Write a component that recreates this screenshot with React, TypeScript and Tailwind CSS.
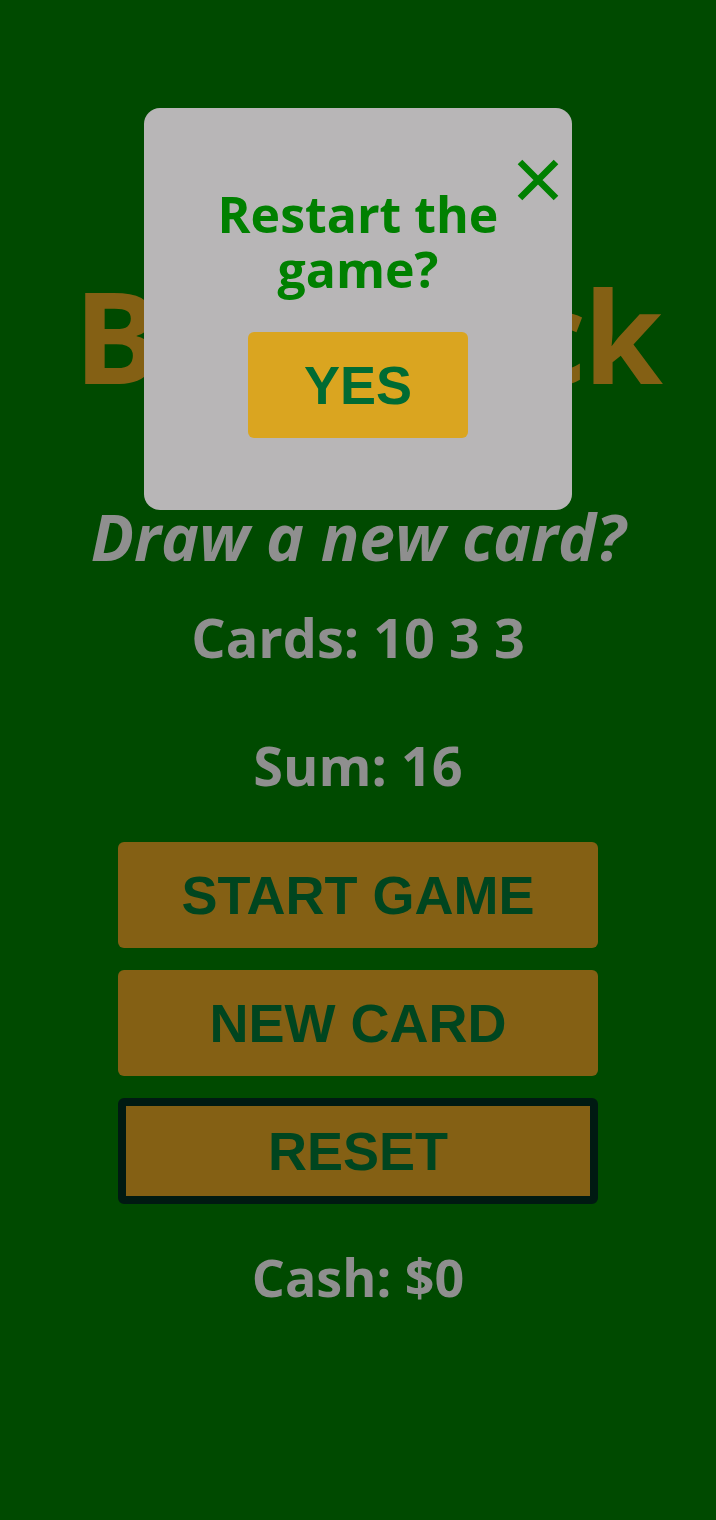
import React from "react";

const sans = { fontFamily: '"Open Sans", "DejaVu Sans", sans-serif' };

export default function App() {
  return (
    <div className="relative min-h-[1520px] w-full bg-[#004a00] overflow-hidden">
      <div className="flex flex-col items-center" style={sans}>
        <h1 className="mt-[271px] pl-[18px] text-[128px] leading-none font-bold text-[#846014] tracking-[-2.5px]">
          Blackjack
        </h1>
        <p className="mt-[106px] text-[64px] leading-none font-bold italic text-[#8f8f8f]">
          Draw a new card?
        </p>
        <p className="mt-[41px] text-[54px] leading-none font-bold text-[#8f8f8f]">
          Cards: 10 3 3
        </p>
        <p className="mt-[74px] text-[54px] leading-none font-bold text-[#8f8f8f]">
          Sum: 16
        </p>
        <div
          className="mt-[50px] flex w-[480px] flex-col gap-[22px]"
          style={{ fontFamily: '"Liberation Sans", Arial, sans-serif' }}
        >
          <button className="h-[106px] w-full rounded-[6px] bg-[#846014] text-[54px] font-bold text-[#00451f]">
            START GAME
          </button>
          <button className="h-[106px] w-full rounded-[6px] bg-[#846014] text-[54px] font-bold text-[#00451f]">
            NEW CARD
          </button>
          <button className="h-[106px] w-full rounded-[6px] border-[8px] border-[#001a12] bg-[#846014] text-[54px] font-bold text-[#00451f]">
            RESET
          </button>
        </div>
        <p className="mt-[47px] text-[52px] leading-none font-bold text-[#8f8f8f]">
          Cash: $0
        </p>
      </div>

      <div
        className="absolute left-[144px] top-[108px] flex h-[402px] w-[428px] flex-col items-center rounded-[16px] bg-[#b8b6b7]"
        style={sans}
      >
        <button className="absolute right-[12px] top-[50px] h-[44px] w-[44px]" aria-label="close">
          <svg viewBox="0 0 44 44" className="h-[44px] w-[44px]">
            <path d="M4 4 L40 40 M40 4 L4 40" stroke="#008000" strokeWidth="6.5" fill="none" />
          </svg>
        </button>
        <h2 className="mt-[79px] text-center text-[50px] font-bold leading-[55px] text-[#008000]">
          Restart the
          <br />
          game?
        </h2>
        <button
          className="mt-[35px] h-[106px] w-[220px] rounded-[6px] bg-[#daa520] text-[54px] font-bold text-[#006b33]"
          style={{ fontFamily: '"Liberation Sans", Arial, sans-serif' }}
        >
          YES
        </button>
      </div>
    </div>
  );
}
